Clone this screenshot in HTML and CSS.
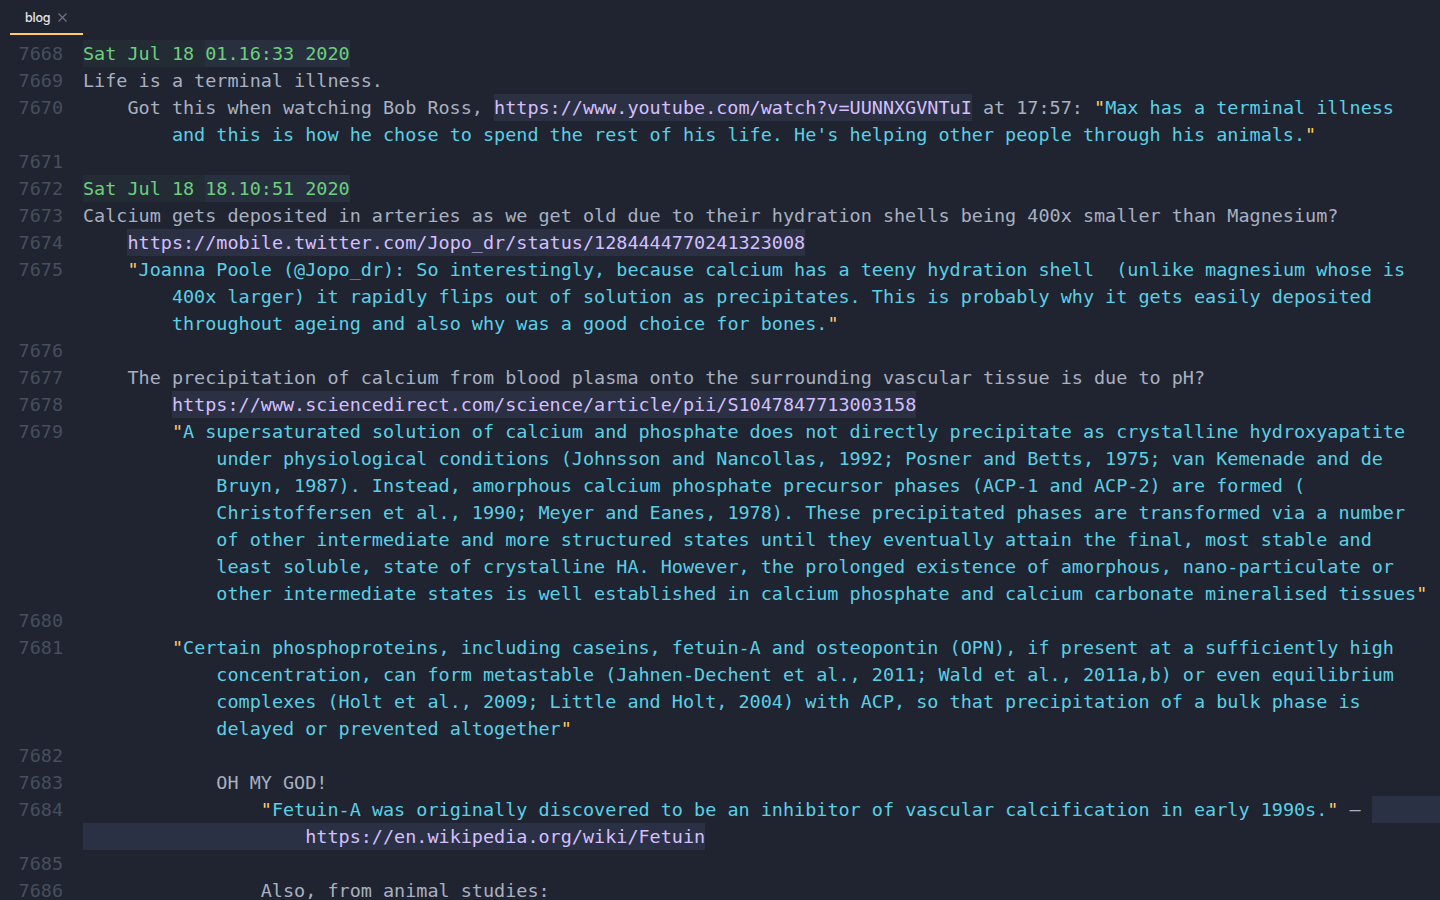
FILE: index.html
```html
<!DOCTYPE html>
<html lang="en">
<head>
<meta charset="utf-8">
<title>blog</title>
<link rel="stylesheet" href="styles.css">
</head>
<body>
<div class="window">
  <div class="tabbar">
    <div class="tab">
      <span class="tab-title">blog</span>
      <svg class="tab-close" width="9" height="9" viewBox="0 0 9 9"><path d="M0.5 0.5L8.5 8.5M8.5 0.5L0.5 8.5" stroke="#6f7787" stroke-width="1.1" fill="none"/></svg>
    </div>
  </div>
  <div class="editor">
    <div class="row"><span class="ln">7668</span><span class="code"><span class="dt-a">Sat Jul 18 </span><span class="dt-b">01.16:33 2020</span></span></div>
    <div class="row"><span class="ln">7669</span><span class="code">Life is a terminal illness.</span></div>
    <div class="row"><span class="ln">7670</span><span class="code">    Got this when watching Bob Ross, <span class="url">https://www.youtube.com/watch?v=UUNNXGVNTuI</span> at 17:57: <span class="str"><span class="q">"</span>Max has a terminal illness</span></span></div>
    <div class="row"><span class="ln"></span><span class="code">        <span class="str">and this is how he chose to spend the rest of his life. He's helping other people through his animals.<span class="q">"</span></span></span></div>
    <div class="row"><span class="ln">7671</span><span class="code"></span></div>
    <div class="row"><span class="ln">7672</span><span class="code"><span class="dt-a">Sat Jul 18 </span><span class="dt-b">18.10:51 2020</span></span></div>
    <div class="row"><span class="ln">7673</span><span class="code">Calcium gets deposited in arteries as we get old due to their hydration shells being 400x smaller than Magnesium?</span></div>
    <div class="row"><span class="ln">7674</span><span class="code">    <span class="url">https://mobile.twitter.com/Jopo_dr/status/1284444770241323008</span></span></div>
    <div class="row"><span class="ln">7675</span><span class="code">    <span class="str"><span class="q">"</span>Joanna Poole (@Jopo_dr): So interestingly, because calcium has a teeny hydration shell  (unlike magnesium whose is</span></span></div>
    <div class="row"><span class="ln"></span><span class="code">        <span class="str">400x larger) it rapidly flips out of solution as precipitates. This is probably why it gets easily deposited</span></span></div>
    <div class="row"><span class="ln"></span><span class="code">        <span class="str">throughout ageing and also why was a good choice for bones.<span class="q">"</span></span></span></div>
    <div class="row"><span class="ln">7676</span><span class="code"></span></div>
    <div class="row"><span class="ln">7677</span><span class="code">    The precipitation of calcium from blood plasma onto the surrounding vascular tissue is due to pH?</span></div>
    <div class="row"><span class="ln">7678</span><span class="code">        <span class="url">https://www.sciencedirect.com/science/article/pii/S1047847713003158</span></span></div>
    <div class="row"><span class="ln">7679</span><span class="code">        <span class="str"><span class="q">"</span>A supersaturated solution of calcium and phosphate does not directly precipitate as crystalline hydroxyapatite</span></span></div>
    <div class="row"><span class="ln"></span><span class="code">            <span class="str">under physiological conditions (Johnsson and Nancollas, 1992; Posner and Betts, 1975; van Kemenade and de</span></span></div>
    <div class="row"><span class="ln"></span><span class="code">            <span class="str">Bruyn, 1987). Instead, amorphous calcium phosphate precursor phases (ACP-1 and ACP-2) are formed (</span></span></div>
    <div class="row"><span class="ln"></span><span class="code">            <span class="str">Christoffersen et al., 1990; Meyer and Eanes, 1978). These precipitated phases are transformed via a number</span></span></div>
    <div class="row"><span class="ln"></span><span class="code">            <span class="str">of other intermediate and more structured states until they eventually attain the final, most stable and</span></span></div>
    <div class="row"><span class="ln"></span><span class="code">            <span class="str">least soluble, state of crystalline HA. However, the prolonged existence of amorphous, nano-particulate or</span></span></div>
    <div class="row"><span class="ln"></span><span class="code">            <span class="str">other intermediate states is well established in calcium phosphate and calcium carbonate mineralised tissues<span class="q">"</span></span></span></div>
    <div class="row"><span class="ln">7680</span><span class="code"></span></div>
    <div class="row"><span class="ln">7681</span><span class="code">        <span class="str"><span class="q">"</span>Certain phosphoproteins, including caseins, fetuin-A and osteopontin (OPN), if present at a sufficiently high</span></span></div>
    <div class="row"><span class="ln"></span><span class="code">            <span class="str">concentration, can form metastable (Jahnen-Dechent et al., 2011; Wald et al., 2011a,b) or even equilibrium</span></span></div>
    <div class="row"><span class="ln"></span><span class="code">            <span class="str">complexes (Holt et al., 2009; Little and Holt, 2004) with ACP, so that precipitation of a bulk phase is</span></span></div>
    <div class="row"><span class="ln"></span><span class="code">            <span class="str">delayed or prevented altogether<span class="q">"</span></span></span></div>
    <div class="row"><span class="ln">7682</span><span class="code"></span></div>
    <div class="row"><span class="ln">7683</span><span class="code">            OH MY GOD!</span></div>
    <div class="row"><span class="ln">7684</span><span class="code">                <span class="str"><span class="q">"</span>Fetuin-A was originally discovered to be an inhibitor of vascular calcification in early 1990s.<span class="q">"</span></span> — <span class="sel">        </span></span></div>
    <div class="row"><span class="ln"></span><span class="code"><span class="sel">                    <span class="url-plain">https://en.wikipedia.org/wiki/Fetuin</span></span></span></div>
    <div class="row"><span class="ln">7685</span><span class="code"></span></div>
    <div class="row"><span class="ln">7686</span><span class="code">                Also, from animal studies:</span></div>
  </div>
</div>
</body>
</html>
```

FILE: styles.css
```css
html, body {
  margin: 0;
  padding: 0;
  background: #1f2430;
  overflow: hidden;
}

.window {
  width: 1440px;
  height: 900px;
  overflow: hidden;
  background: #1f2430;
}

.tabbar {
  height: 40px;
  display: flex;
  align-items: flex-start;
  padding-left: 10px;
}

.tab {
  width: 73px;
  height: 33px;
  border-bottom: 2px solid #ffcc66;
  display: flex;
  align-items: center;
  box-sizing: content-box;
}

.tab-title {
  font-family: "Inter", "Liberation Sans", Arial, sans-serif;
  font-size: 12.5px;
  font-weight: 500;
  color: #e2e4e8;
  margin-left: 15px;
  margin-top: 1px;
  letter-spacing: -0.2px;
}

.tab-close {
  margin-left: 8px;
  margin-top: 2px;
}

.editor {
  font-family: "DejaVu Sans Mono", monospace;
  font-size: 18.47px;
  color: #a8b0c1;
}

.row {
  display: flex;
  height: 27px;
  line-height: 27px;
}

.ln {
  flex: 0 0 63px;
  text-align: right;
  padding-right: 20px;
  color: #474e5f;
}

.code {
  white-space: pre;
}

.dt-a,
.dt-b,
.url,
.sel {
  display: inline-block;
  height: 27px;
  vertical-align: top;
}

.dt-a {
  color: #6ccf7c;
  background: #232b35;
}

.dt-b {
  color: #6ccf7c;
  background: #283040;
}

.url {
  color: #d4bfff;
  background: #2b3142;
}

.url-plain {
  color: #d4bfff;
}

.sel {
  background: #2b3144;
}

.str {
  color: #5ccfe6;
}

.q {
  color: #ffcc66;
}
```
